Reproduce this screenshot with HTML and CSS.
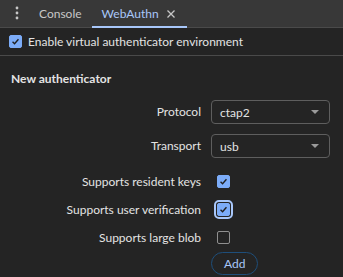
FILE: index.html
```html
<!DOCTYPE html>
<html lang="en">
<head>
    <meta charset="UTF-8">
    <title>WebAuthn</title>
    <link rel="stylesheet" href="styles.css">
</head>
<body>
    <div class="tabbar">
        <div class="menu">
            <svg width="4" height="16" viewBox="0 0 4 16"><circle cx="2" cy="2" r="1.4"/><circle cx="2" cy="7" r="1.4"/><circle cx="2" cy="12" r="1.4"/></svg>
        </div>
        <div class="tab">Console</div>
        <div class="tab active">WebAuthn
            <svg class="close" width="8" height="8" viewBox="0 0 8 8"><path d="M0.5 0.5 L7.5 7.5 M7.5 0.5 L0.5 7.5"/></svg>
        </div>
    </div>

    <div class="enable-row">
        <span class="cb checked"><svg viewBox="0 0 13 13"><path d="M3 6.8 L5.4 9.2 L10 3.8"/></svg></span>
        <span>Enable virtual authenticator environment</span>
    </div>

    <div class="panel">
        <h2>New authenticator</h2>
        <div class="form">
            <label class="sel-label">Protocol</label>
            <div class="select">ctap2<span class="arrow"></span></div>

            <label class="sel-label">Transport</label>
            <div class="select">usb<span class="arrow"></span></div>

            <label>Supports resident keys</label>
            <div class="cb-cell"><span class="cb checked"><svg viewBox="0 0 13 13"><path d="M3 6.8 L5.4 9.2 L10 3.8"/></svg></span></div>

            <label>Supports user verification</label>
            <div class="cb-cell"><span class="cb checked focus"><svg viewBox="0 0 13 13"><path d="M3 6.8 L5.4 9.2 L10 3.8"/></svg></span></div>

            <label>Supports large blob</label>
            <div class="cb-cell"><span class="cb"></span></div>

            <span></span>
            <div><button class="add">Add</button></div>
        </div>
    </div>
</body>
</html>
```

FILE: styles.css
```css
body {
    margin: 0;
    background-color: #242424;
    color: #e3e3e3;
    font-family: Lato, sans-serif;
    font-size: 12px;
    height: 277px;
    overflow: hidden;
}

.tabbar {
    height: 27px;
    background-color: #383838;
    border-bottom: 1px solid #4a4a4a;
    display: flex;
    align-items: stretch;
}

.menu {
    width: 29px;
    display: flex;
    align-items: center;
    justify-content: center;
    padding-left: 5px;
    box-sizing: border-box;
}

.menu svg {
    fill: #c7c7c7;
}

.tab {
    display: flex;
    align-items: center;
    padding: 0 10px;
    color: #c7c7c7;
}

.tab.active {
    color: #a8c7fa;
    border-bottom: 2px solid #a8c7fa;
    margin-bottom: -1px;
    padding-top: 1px;
    padding-right: 12px;
}

.close {
    margin-left: 8px;
    stroke: #c7c7c7;
    stroke-width: 1.3;
}

.enable-row {
    height: 27px;
    border-bottom: 1px solid #4a4a4a;
    display: flex;
    align-items: center;
    gap: 6px;
    padding-left: 9px;
}

.cb {
    width: 13px;
    height: 13px;
    box-sizing: border-box;
    border: 1px solid #8f8f8f;
    border-radius: 2px;
    display: inline-block;
    flex: none;
}

.cb.checked {
    background-color: #7cacf8;
    border-color: #7cacf8;
}

.cb svg {
    display: block;
    width: 11px;
    height: 11px;
    fill: none;
    stroke: #1f1f1f;
    stroke-width: 1.6;
}

.cb.focus {
    outline: 2px solid #a8c7fa;
    outline-offset: 1px;
}

.panel {
    padding: 15px 11px 0;
}

h2 {
    margin: 0 0 14px;
    font-size: 12px;
    font-weight: bold;
}

.form {
    display: grid;
    grid-template-columns: 190px 119px;
    grid-template-rows: 34px 33px 28px 28px 28px 24px;
    column-gap: 10px;
}

.form label {
    text-align: right;
    align-self: center;
}

.form .sel-label {
    align-self: start;
    line-height: 24px;
}

.select {
    height: 24px;
    box-sizing: border-box;
    border: 1px solid #5e5e5e;
    border-radius: 4px;
    padding: 0 8px;
    display: flex;
    align-items: center;
    justify-content: space-between;
}

.arrow {
    width: 0;
    height: 0;
    border-left: 4px solid transparent;
    border-right: 4px solid transparent;
    border-top: 4px solid #9a9a9a;
    margin-right: 2px;
}

.cb-cell {
    display: flex;
    align-items: center;
    padding-left: 6px;
}

.add {
    height: 23px;
    margin-top: 1px;
    padding: 0 12px;
    border: 1px solid #1e4e7a;
    border-radius: 12px;
    background: transparent;
    color: #a8c7fa;
    font-family: inherit;
    font-size: 12px;
}
```
